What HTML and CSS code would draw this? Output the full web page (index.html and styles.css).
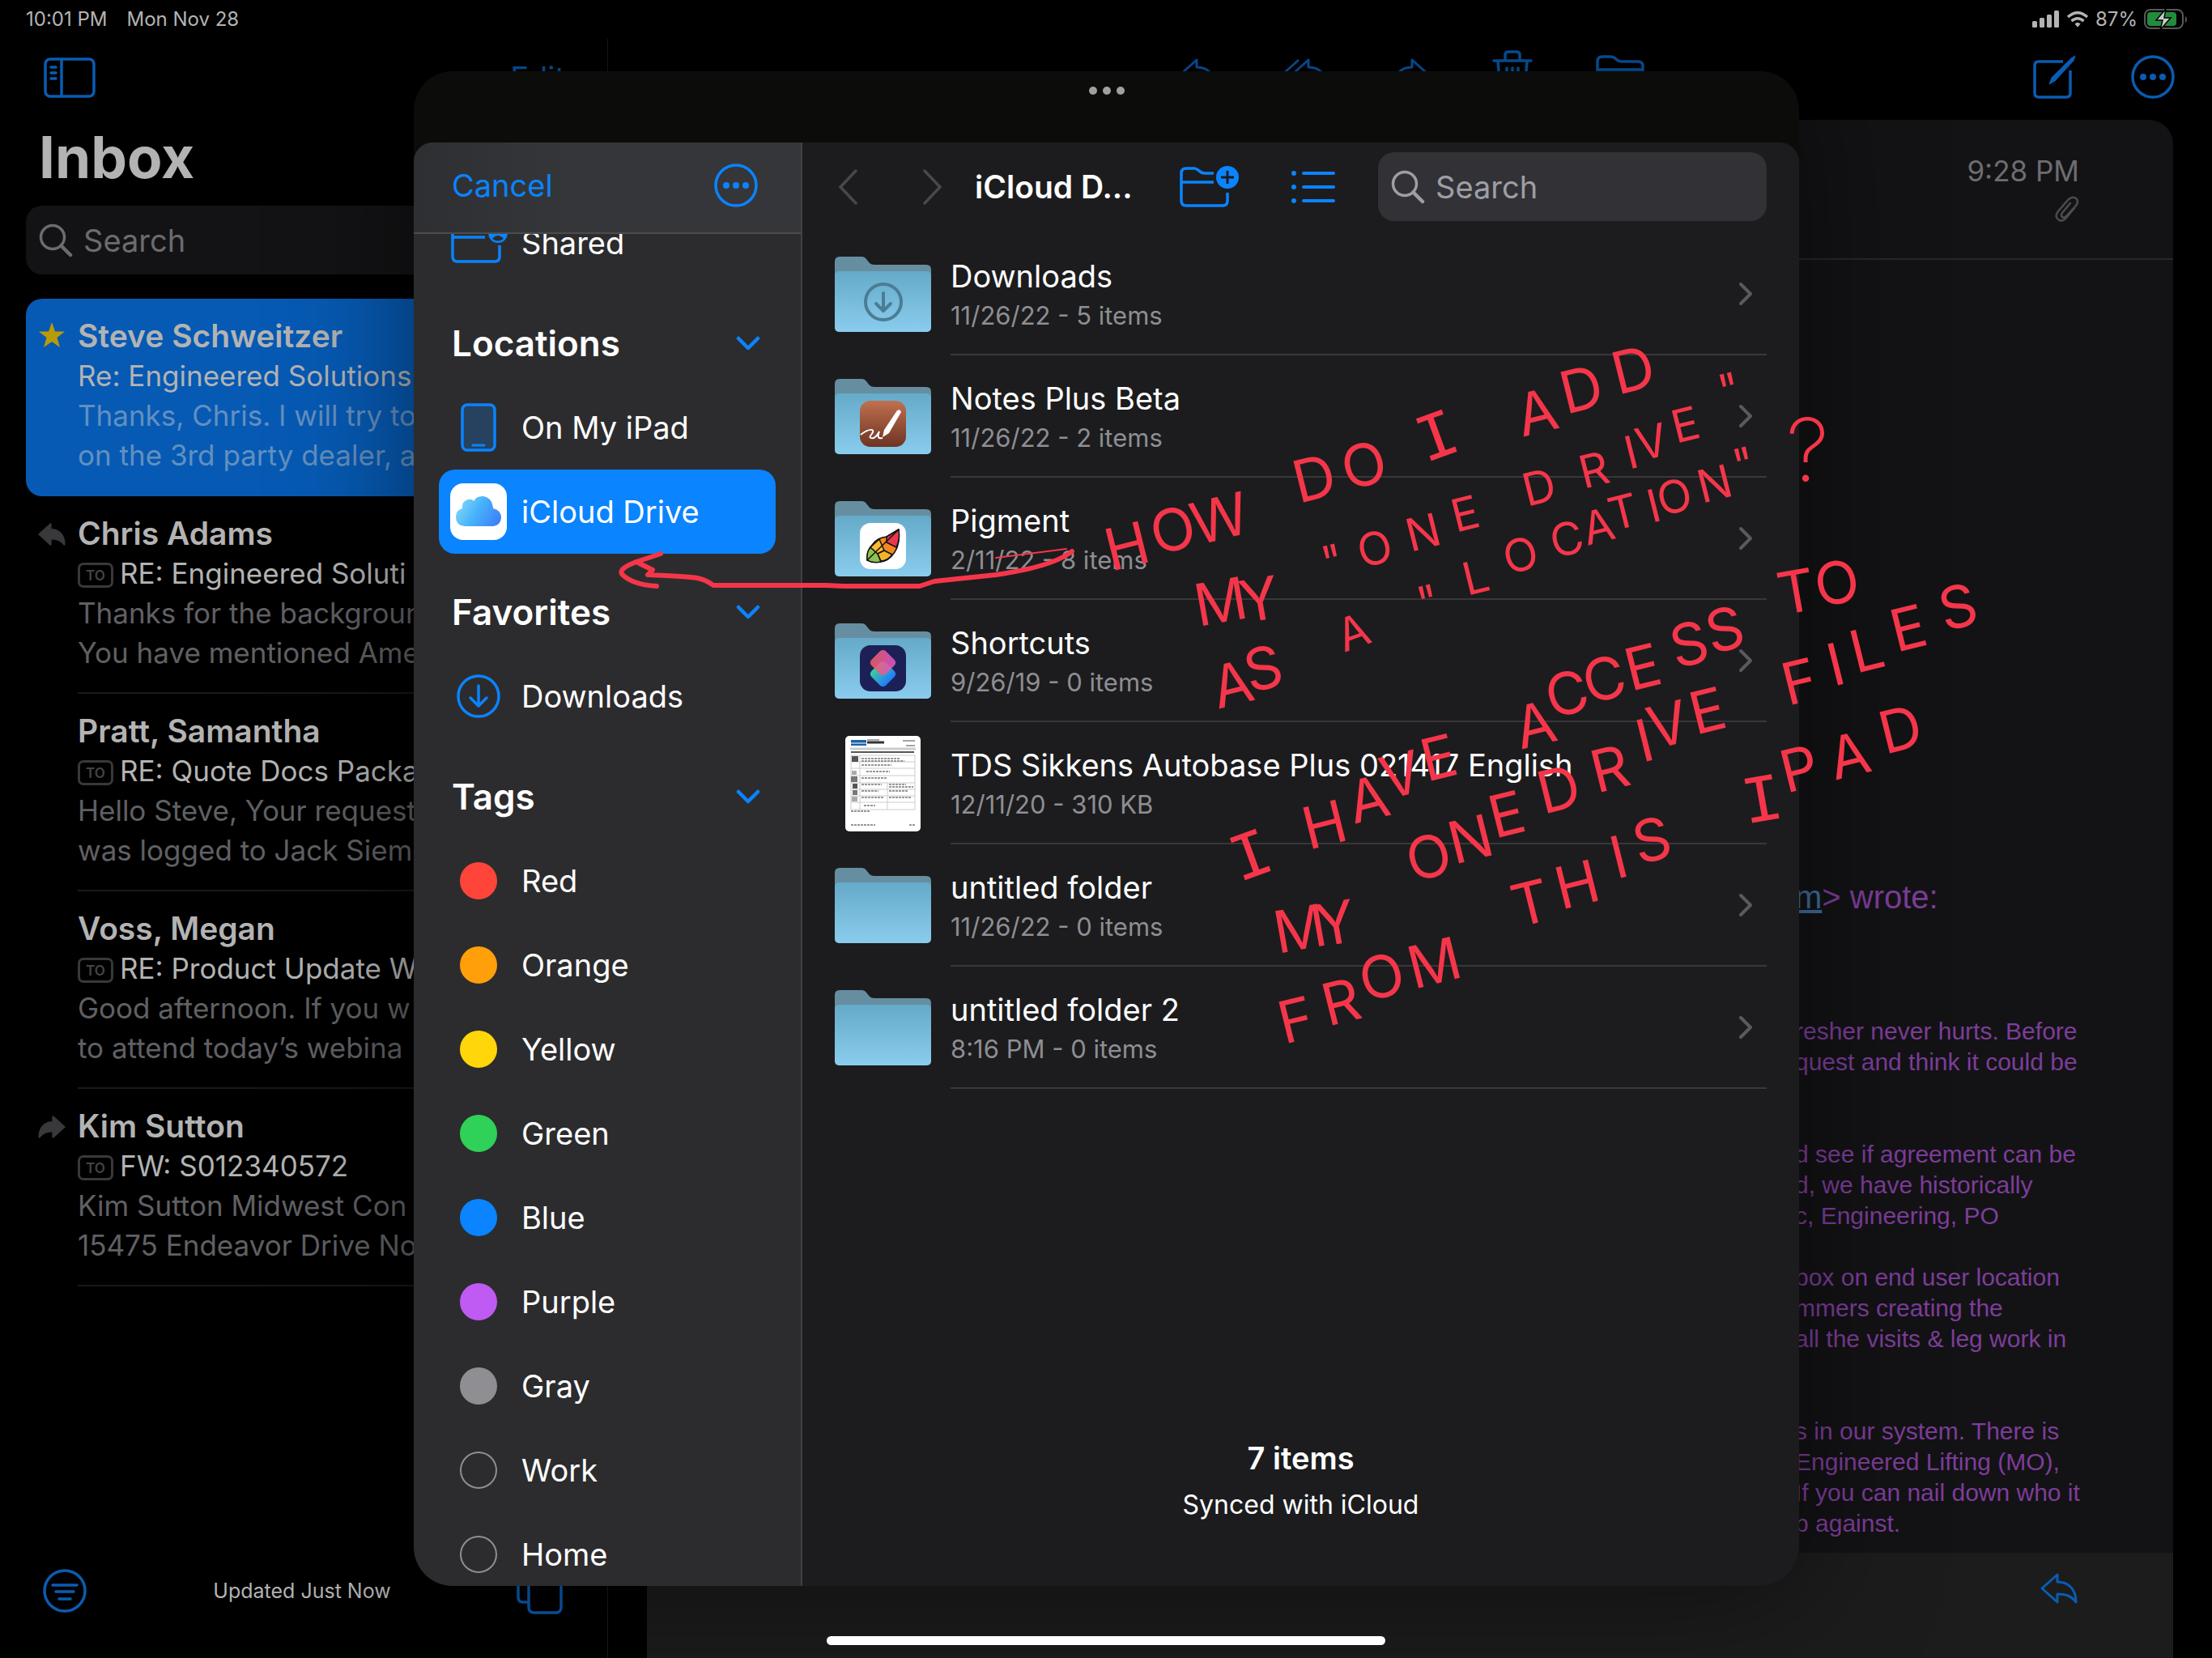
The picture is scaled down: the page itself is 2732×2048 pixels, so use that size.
FILE: index.html
```html
<!DOCTYPE html>
<html lang="en">
<head>
<meta charset="utf-8">
<meta name="viewport" content="width=device-width, initial-scale=1">
<title>Inbox</title>
<link rel="stylesheet" href="styles.css">
</head>
<body>
<svg class="defs" width="0" height="0" aria-hidden="true">
  <defs>
    <linearGradient id="folderFront" x1="0" y1="0" x2="0" y2="1"><stop offset="0" stop-color="#65aac9"/><stop offset="1" stop-color="#8acced"/></linearGradient>
    <linearGradient id="notesFill" x1="0" y1="0" x2="0" y2="1"><stop offset="0" stop-color="#c0704f"/><stop offset="1" stop-color="#6d3423"/></linearGradient>
    <linearGradient id="cloudFill" x1="0" y1="0.3" x2="1" y2="0.7"><stop offset="0" stop-color="#7fd8f6"/><stop offset="0.5" stop-color="#45b0fb"/><stop offset="1" stop-color="#3e82f7"/></linearGradient>
    <linearGradient id="scTop" x1="0" y1="1" x2="1" y2="0"><stop offset="0" stop-color="#f0605a"/><stop offset="1" stop-color="#e055d0"/></linearGradient>
    <linearGradient id="scBottom" x1="0" y1="0" x2="1" y2="0"><stop offset="0" stop-color="#3ecf9a"/><stop offset="1" stop-color="#1f7bff"/></linearGradient>
    <symbol id="folder" viewBox="0 0 119 93">
      <path d="M0 6Q0 0 6 0H33Q37 0 39 3L43 8Q45 10 49 10H113Q119 10 119 16V40H0Z" fill="#668ea1"/>
      <rect y="18" width="119" height="75" rx="5" fill="url(#folderFront)"/>
    </symbol>
    <symbol id="search" viewBox="0 0 42 42"><circle cx="17" cy="17" r="14.500" fill="none" stroke="currentColor" stroke-width="3.500"/><path d="M27.500 27.500 39 39" stroke="currentColor" stroke-width="4.500" stroke-linecap="round"/></symbol>
    <symbol id="more" viewBox="0 0 54 54"><circle cx="27" cy="27" r="25" fill="none" stroke="currentColor" stroke-width="3.500"/><g fill="currentColor"><circle cx="15" cy="27" r="4"/><circle cx="27" cy="27" r="4"/><circle cx="39" cy="27" r="4"/></g></symbol>
    <symbol id="reply" viewBox="0 0 46 40"><path d="M2 20 21 3V12C35 12 44 21 44 37C38 29 31 27 21 27V37Z" fill="none" stroke="currentColor" stroke-width="3" stroke-linejoin="round"/></symbol>
    <symbol id="replyFill" viewBox="0 0 46 40"><path d="M2 20 21 3V12C35 12 44 21 44 37C38 29 31 27 21 27V37Z" fill="currentColor" stroke="currentColor" stroke-width="3" stroke-linejoin="round"/></symbol>
    <symbol id="next" viewBox="0 0 18 30"><path d="M3 3 15 15 3 27" fill="none" stroke="currentColor" stroke-width="4" stroke-linecap="round" stroke-linejoin="round"/></symbol>
    <symbol id="down" viewBox="0 0 30 18"><path d="M3 3 15 15 27 3" fill="none" stroke="currentColor" stroke-width="4.500" stroke-linecap="round" stroke-linejoin="round"/></symbol>
    <symbol id="download" viewBox="0 0 54 54"><circle cx="27" cy="27" r="25" fill="none" stroke="currentColor" stroke-width="3.500"/><path d="M27 14V38M17 29 27 39 37 29" fill="none" stroke="currentColor" stroke-width="3.500" stroke-linecap="round" stroke-linejoin="round"/></symbol>
  </defs>
</svg>

<div class="screen">
  <header class="status">
    <span>10:01 PM</span><span>Mon Nov 28</span>
    <span class="status-right">
      <svg width="34" height="22" viewBox="0 0 34 22" fill="currentColor"><rect x="0" y="13" width="6" height="8" rx="1.500"/><rect x="9" y="9" width="6" height="12" rx="1.500"/><rect x="18" y="5" width="6" height="16" rx="1.500"/><rect x="27" y="0" width="6" height="21" rx="1.500"/></svg>
      <svg width="28" height="20" viewBox="0 0 28 20" fill="none" stroke="currentColor" stroke-width="3.500"><path d="M2 7Q14-3.500 26 7"/><path d="M6.500 12Q14 5.500 21.500 12"/><path d="M11 15.500Q14 13 17 15.500L14 19Z" fill="currentColor" stroke-width="1"/></svg>
      <span>87%</span>
      <svg width="54" height="26" viewBox="0 0 54 26"><rect x="1" y="1" width="47" height="23" rx="7" fill="none" stroke="#58585a" stroke-width="2"/><path d="M51 9V17Q53 16 53 13T51 9Z" fill="#58585a"/><rect x="4" y="4" width="36" height="17" rx="4" fill="#238c3c"/><path d="M27 0 15 14H23L20 26 33 11H25Z" fill="#c8c8c8" stroke="#000" stroke-width="1.500"/></svg>
    </span>
  </header>

  <div class="mail">
    <aside class="inbox">
      <div class="inbox-bar">
        <button aria-label="Show mailboxes"><svg width="64" height="50" viewBox="0 0 64 50" fill="none" stroke="currentColor" stroke-width="3.500" stroke-linecap="round"><rect x="2" y="2" width="60" height="46" rx="6"/><path d="M22 2V48M9 12H15M9 19H15M9 26H15"/></svg></button>
        <button>Edit</button>
      </div>
      <h1>Inbox</h1>
      <label class="search dim"><svg width="42" height="42"><use href="#search"/></svg><input type="search" placeholder="Search" aria-label="Search mail"></label>
      <ul class="messages">
        <li class="selected"><a href="#m1">
          <svg class="mark star" width="34" height="34" viewBox="0 0 34 34"><path d="M17 1 21 12.500 33 12.500 23.500 20 27 32 17 25 7 32 10.500 20 1 12.500 13 12.500Z" fill="currentColor"/></svg>
          <strong>Steve Schweitzer</strong><span class="subject">Re: Engineered Solutions</span><span class="preview">Thanks, Chris. I will try to<br>on the 3rd party dealer, a</span></a></li>
        <li><a href="#m2">
          <svg class="mark" width="34" height="30"><use href="#replyFill"/></svg>
          <strong>Chris Adams</strong><span class="subject"><i>TO</i>RE: Engineered Soluti</span><span class="preview">Thanks for the backgroun<br>You have mentioned Ame</span></a></li>
        <li><a href="#m3">
          <strong>Pratt, Samantha</strong><span class="subject"><i>TO</i>RE: Quote Docs Packa</span><span class="preview">Hello Steve, Your request<br>was logged to Jack Siem</span></a></li>
        <li><a href="#m4">
          <strong>Voss, Megan</strong><span class="subject"><i>TO</i>RE: Product Update W</span><span class="preview">Good afternoon. If you w<br>to attend today’s webina</span></a></li>
        <li><a href="#m5">
          <svg class="mark flip" width="34" height="30"><use href="#replyFill"/></svg>
          <strong>Kim Sutton</strong><span class="subject"><i>TO</i>FW: S012340572</span><span class="preview">Kim Sutton Midwest Con<br>15475 Endeavor Drive No</span></a></li>
      </ul>
      <footer class="inbox-foot">
        <button aria-label="Filter"><svg width="56" height="56" viewBox="0 0 56 56" fill="none" stroke="currentColor" stroke-width="3.500" stroke-linecap="round"><circle cx="28" cy="28" r="25"/><path d="M13 21H43M17 29H39M21 38H35"/></svg></button>
        <span>Updated Just Now</span>
        <button aria-label="Windows"><svg width="58" height="58" viewBox="0 0 58 58" fill="none" stroke="currentColor" stroke-width="3.500"><rect x="15" y="8" width="40" height="48" rx="6"/><path d="M15 43H8Q2 43 2 37V8Q2 2 8 2H36Q42 2 42 8"/></svg></button>
      </footer>
    </aside>

    <main class="reader">
      <div class="reader-bar">
        <div class="reader-actions">
          <button aria-label="Reply"><svg width="46" height="40"><use href="#reply"/></svg></button>
          <button aria-label="Reply all"><svg width="60" height="40" viewBox="0 0 60 40" fill="none" stroke="currentColor" stroke-width="3" stroke-linejoin="round"><path d="M16 20 35 3V12C49 12 58 21 58 37C52 29 45 27 35 27V37Z"/><path d="M23 3 4 20 23 37"/></svg></button>
          <button aria-label="Forward"><svg class="flip" width="46" height="40"><use href="#reply"/></svg></button>
          <button aria-label="Delete"><svg width="50" height="58" viewBox="0 0 50 58" fill="none" stroke="currentColor" stroke-width="3.500" stroke-linecap="round"><path d="M2 13H48M7 13 10 52Q11 56 15 56H35Q39 56 40 52L43 13M16 12V6Q16 2 20 2H30Q34 2 34 6V12M18 22V46M25 22V46M32 22V46"/></svg></button>
          <button aria-label="Move"><svg width="60" height="46" viewBox="0 0 60 46" fill="none" stroke="currentColor" stroke-width="3.500"><path d="M2 38V8Q2 2 8 2H18Q22 2 25 5T31 8H52Q58 8 58 14V38Q58 44 52 44H8Q2 44 2 38ZM2 18H58"/></svg></button>
        </div>
        <button aria-label="New message"><svg width="56" height="56" viewBox="0 0 56 56" fill="none" stroke="currentColor" stroke-width="3.500"><path d="M38 9H8Q3 9 3 14V48Q3 53 8 53H42Q47 53 47 48V20"/><path d="M21 37 24 29 48 5 53 2 51 8 28 33Z" fill="currentColor" stroke-width="1"/></svg></button>
        <button aria-label="More"><svg width="54" height="54"><use href="#more"/></svg></button>
      </div>
      <article class="card">
        <div class="card-head">
          <time>9:28 PM</time>
          <svg width="30" height="34" viewBox="0 0 30 34" fill="none" stroke="currentColor" stroke-width="2.500" stroke-linecap="round"><path d="M24 15 14 27Q9 33 4 29T4 19L17 4Q22 0 26 3T26 12L14 25Q11 28 9 26T9 21L19 9"/></svg>
        </div>
        <div class="letter">
          <p class="wrote"><a href="#sender">m</a>&gt; wrote:</p>
          <p>resher never hurts. Before<br>quest and think it could be</p>
          <p>d see if agreement can be<br>d, we have historically<br>c, Engineering, PO</p>
          <p>box on end user location<br>mmers creating the<br>all the visits &amp; leg work in</p>
          <p>s in our system. There is<br>Engineered Lifting (MO),<br>If you can nail down who it<br>p against.</p>
        </div>
        <footer class="card-foot"><button aria-label="Reply to message"><svg width="46" height="40"><use href="#reply"/></svg></button></footer>
      </article>
    </main>
  </div>

  <section class="modal" role="dialog" aria-label="iCloud Drive">
    <div class="grip"><b></b><b></b><b></b></div>
    <div class="sheet">
      <nav class="places">
        <div class="places-bar"><button>Cancel</button><button aria-label="More options"><svg width="54" height="54"><use href="#more"/></svg></button></div>
        <div class="places-list">
          <a class="place first" href="#shared"><span class="ico blue"><svg width="72" height="50" viewBox="0 0 72 50" fill="none" stroke="currentColor" stroke-width="3.500"><path d="M44 8H31Q27 8 25 5T19 2H10Q4 2 4 8V42Q4 48 10 48H56Q62 48 62 42V28M4 18H44"/><circle cx="60" cy="13" r="12" fill="currentColor" stroke="none"/><circle cx="60" cy="10" r="4" fill="#2c2c2e" stroke="none"/><path d="M53 20Q60 12 67 20Q60 25 53 20Z" fill="#2c2c2e" stroke="none"/></svg></span>Shared</a>
          <h2>Locations<svg width="30" height="18"><use href="#down"/></svg></h2>
          <a class="place" href="#ipad"><span class="ico blue"><svg width="44" height="60" viewBox="0 0 44 60"><rect x="2" y="2" width="40" height="56" rx="6" fill="#26425f" stroke="currentColor" stroke-width="3.500"/><path d="M15 52H29" stroke="currentColor" stroke-width="3" stroke-linecap="round"/></svg></span>On My iPad</a>
          <a class="place current" href="#icloud"><span class="ico"><svg width="70" height="70" viewBox="0 0 70 70"><rect width="70" height="70" rx="16" fill="#fff"/><path d="M18 53Q7 52 7 42Q7 33 15 31Q14 22 22 20Q27 19 29 22Q33 15 41 16Q52 18 53 31Q63 33 63 43Q62 52 53 53Z" fill="url(#cloudFill)"/></svg></span>iCloud Drive</a>
          <h2>Favorites<svg width="30" height="18"><use href="#down"/></svg></h2>
          <a class="place" href="#downloads"><span class="ico blue"><svg width="54" height="54"><use href="#download"/></svg></span>Downloads</a>
          <h2>Tags<svg width="30" height="18"><use href="#down"/></svg></h2>
          <a class="place" href="#red"><span class="ico"><span class="dot red"></span></span>Red</a>
          <a class="place" href="#orange"><span class="ico"><span class="dot orange"></span></span>Orange</a>
          <a class="place" href="#yellow"><span class="ico"><span class="dot yellow"></span></span>Yellow</a>
          <a class="place" href="#green"><span class="ico"><span class="dot green"></span></span>Green</a>
          <a class="place" href="#blue"><span class="ico"><span class="dot azure"></span></span>Blue</a>
          <a class="place" href="#purple"><span class="ico"><span class="dot purple"></span></span>Purple</a>
          <a class="place" href="#gray"><span class="ico"><span class="dot gray"></span></span>Gray</a>
          <a class="place" href="#work"><span class="ico"><span class="dot"></span></span>Work</a>
          <a class="place" href="#home"><span class="ico"><span class="dot"></span></span>Home</a>
        </div>
      </nav>

      <div class="files">
        <div class="files-bar">
          <button class="off" aria-label="Back"><svg width="24" height="46" viewBox="0 0 24 46"><path d="M22 3 3 23 22 43" fill="none" stroke="currentColor" stroke-width="3.500" stroke-linecap="round"/></svg></button>
          <button class="off forward" aria-label="Forward"><svg width="24" height="46" viewBox="0 0 24 46"><path d="M2 3 21 23 2 43" fill="none" stroke="currentColor" stroke-width="3.500" stroke-linecap="round"/></svg></button>
          <h2>iCloud D...</h2>
          <button aria-label="New folder"><svg width="74" height="52" viewBox="0 0 74 52"><path d="M42 9H31Q27 9 24 6T18 3H8Q2 3 2 9V43Q2 49 8 49H53Q59 49 59 43V33M2 20H42" fill="none" stroke="currentColor" stroke-width="3.500"/><circle cx="59" cy="14" r="14" fill="currentColor"/><path d="M59 6V22M51 14H67" stroke="#1c1c1e" stroke-width="3"/></svg></button>
          <button aria-label="List view"><svg width="54" height="42" viewBox="0 0 54 42"><path d="M15 4H52M15 21H52M15 38H52" stroke="currentColor" stroke-width="4" stroke-linecap="round"/><g fill="currentColor"><circle cx="3" cy="4" r="3"/><circle cx="3" cy="21" r="3"/><circle cx="3" cy="38" r="3"/></g></svg></button>
          <label class="search"><svg width="42" height="42"><use href="#search"/></svg><input type="search" placeholder="Search" aria-label="Search files"></label>
        </div>
        <ul class="file-list">
          <li><svg width="119" height="93"><use href="#folder"/><g transform="translate(37 33)" color="#4a7d94"><circle cx="23" cy="23" r="22" fill="none" stroke="currentColor" stroke-width="4"/><path d="M23 12V33M14 25 23 34 32 25" fill="none" stroke="currentColor" stroke-width="4" stroke-linecap="round" stroke-linejoin="round"/></g></svg>
            <a href="#f1"><span><strong>Downloads</strong><small>11/26/22 - 5 items</small></span><svg width="18" height="30"><use href="#next"/></svg></a></li>
          <li><svg width="119" height="93"><use href="#folder"/><g transform="translate(31 27)"><rect width="57" height="57" rx="13" fill="url(#notesFill)"/><path d="M28 45 30 36 46 12Q50 10 51 14L36 40Z" fill="#fff"/><path d="M1 42Q10 35 15 36Q18 37 14 42T17 46Q21 44 24 38Q20 48 28 46" fill="none" stroke="#fff" stroke-width="2"/></g></svg>
            <a href="#f2"><span><strong>Notes Plus Beta</strong><small>11/26/22 - 2 items</small></span><svg width="18" height="30"><use href="#next"/></svg></a></li>
          <li><svg width="119" height="93"><use href="#folder"/><g transform="translate(31 27)" stroke="#111" stroke-width="1.500" stroke-linejoin="round"><rect width="57" height="57" rx="13" fill="#fff" stroke="none"/><path d="M9 46Q8 34 16 26Q22 18 33 17L48 8Q50 26 43 36Q34 50 20 48Z" fill="#f28a1f"/><path d="M33 17 48 8Q50 20 45 30L33 24Z" fill="#e8384f"/><path d="M9 46Q8 36 13 30L22 38 26 48Q16 50 9 46Z" fill="#8fc152"/><path d="M13 30 24 20 30 34 22 38Z" fill="#fdbb2d"/><path d="M26 47 22 38 30 34 40 39Q34 47 26 47Z" fill="#f2b52a"/><path d="M9 46 48 8" fill="none"/></g></svg>
            <a href="#f3"><span><strong>Pigment</strong><small>2/11/22 - 8 items</small></span><svg width="18" height="30"><use href="#next"/></svg></a></li>
          <li><svg width="119" height="93"><use href="#folder"/><g transform="translate(31 27)"><rect width="57" height="57" rx="13" fill="#1d2057"/><rect x="16" y="23" width="25" height="25" rx="5" transform="rotate(45 28.500 35.500)" fill="url(#scBottom)"/><rect x="16" y="9" width="25" height="25" rx="5" transform="rotate(45 28.500 21.500)" fill="url(#scTop)" opacity="0.880"/></g></svg>
            <a href="#f4"><span><strong>Shortcuts</strong><small>9/26/19 - 0 items</small></span><svg width="18" height="30"><use href="#next"/></svg></a></li>
          <li><svg width="119" height="118" viewBox="0 0 119 118"><rect x="13" width="93" height="118" rx="5" fill="#fff"/><path d="M20 5H39V12H20Z" fill="#1d62a8"/><path d="M20 9H39" stroke="#fff"/><path d="M40 8H61" stroke="#333" stroke-width="3"/><path d="M84 6H99M88 12H99M40 5H55" stroke="#888" stroke-width="1.500"/><path d="M19 16H100" stroke="#ccc" stroke-width="3"/><path d="M20 20H98" stroke="#555" stroke-width="2"/><g fill="none" stroke="#ccc"><rect x="20" y="24" width="79" height="67"/><path d="M31 24V91M65 58V91M20 32H99M20 40H99M20 49H99M20 58H99M20 66H99M20 74H99M20 82H99"/></g><g fill="#555"><rect x="21" y="25" width="8" height="7"/><rect x="21" y="43" width="6" height="5" fill="#aaa"/><rect x="20" y="50" width="8" height="7" fill="#777"/><rect x="22" y="59" width="6" height="6"/><rect x="22" y="67" width="6" height="6" fill="#777"/><rect x="21" y="75" width="7" height="6" fill="#aaa"/></g><path d="M33 28H80M33 31H86M33 36H70M39 44H68M33 52H64M33 60H58M67 60H88M67 63H97M33 68H54M67 68H90M33 76H60M67 76H94M36 86H50M20 93H44M20 110H50M92 110H99" stroke="#777" stroke-width="1.500" stroke-dasharray="3 1"/></svg>
            <a href="#f5"><span><strong>TDS Sikkens Autobase Plus 021417 English</strong><small>12/11/20 - 310 KB</small></span></a></li>
          <li><svg width="119" height="93"><use href="#folder"/></svg>
            <a href="#f6"><span><strong>untitled folder</strong><small>11/26/22 - 0 items</small></span><svg width="18" height="30"><use href="#next"/></svg></a></li>
          <li><svg width="119" height="93"><use href="#folder"/></svg>
            <a href="#f7"><span><strong>untitled folder 2</strong><small>8:16 PM - 0 items</small></span><svg width="18" height="30"><use href="#next"/></svg></a></li>
        </ul>
        <footer class="files-foot"><strong>7 items</strong><span>Synced with iCloud</span></footer>
      </div>
    </div>
  </section>

  <!-- Red pen markup laid over the screen; each letter sits on its own spot -->
  <svg class="ink" viewBox="0 0 2732 2048">
    <g fill="none" stroke="currentColor" stroke-width="6" stroke-linecap="round" stroke-linejoin="round">
      <path d="M816 684 786 694Q764 702 768 709Q780 722 811 724"/>
      <path d="M786 694 806 704 800 710Q850 712 861 714T881 723H1020L1042 724H1136L1154 718 1230 710Q1300 700 1324 681"/>
      <path d="M1230 689 1317 678" stroke-width="2"/>
    </g>
    <g class="l">
      <text x="1372 1428 1478" y="706 686 674" rotate="-14">HOW</text>
      <text x="1604 1664" y="622 606" rotate="-14">DO</text>
      <text class="bar" x="1760" y="572" rotate="-20">I</text>
      <text x="1880 1934 1998" y="540 512 488" rotate="-14">ADD</text>
      <text x="1480 1536" y="774 770" rotate="-10">MY</text>
      <text x="1504 1544" y="876 856" rotate="-14">AS</text>
      <text class="bar" x="1530" y="1090" rotate="-20">I</text>
      <text x="1616 1672 1712 1762" y="1050 1018 988 966" rotate="-14">HAVE</text>
      <text x="1878 1916 1962 2014 2070 2114" y="926 888 870 854 826 808" rotate="-14">ACCESS</text>
      <text x="2200 2246" y="760 750" rotate="-10">TO</text>
      <text x="1578 1630" y="1178 1170" rotate="-10">MY</text>
      <text x="1744 1796 1846 1906 1972 2028 2042 2094" y="1090 1068 1036 1006 980 942 926 908" rotate="-14">ONEDRIVE</text>
      <text x="2208 2264 2292 2342 2402" y="872 848 832 806 780" rotate="-14">FILES</text>
      <text x="1586 1640 1686 1746" y="1290 1268 1238 1222" rotate="-14">FROM</text>
      <text x="1874 1928 1996 2024" y="1146 1124 1086 1068" rotate="-14">THIS</text>
      <text x="2206 2266 2328" y="980 964 932" rotate="-14">PAD</text>
      <text class="bar" x="2156" y="1018" rotate="-10">I</text>
    </g>
    <text class="xl" x="2206" y="594">?</text>
    <g class="s">
      <text x="1638 1682 1742 1798" y="716 702 682 658" rotate="-14">"ONE</text>
      <text x="1886 1956 2012 2026 2070 2128" y="626 604 580 570 548 504" rotate="-14">DRIVE"</text>
      <text x="1660" y="806" rotate="-20">A</text>
      <text x="1756" y="766" rotate="-14">"</text>
      <text x="1812 1862 1920 1960 1992 2040 2052 2102 2146" y="736 710 690 674 656 646 638 622 596" rotate="-14">LOCATION"</text>
    </g>
  </svg>
  <div class="home"></div>
</div>
</body>
</html>
```

FILE: styles.css
```css
* { box-sizing: border-box; }
body {
  margin: 0;
  background: #000;
  color: #fff;
  font: 400 38px/1 Inter, "Liberation Sans", sans-serif;
}
h1, h2, p, ul { margin: 0; padding: 0; }
ul { list-style: none; }
a { color: inherit; text-decoration: none; }
svg { display: block; flex: none; }
button {
  display: block;
  padding: 0;
  border: 0;
  background: none;
  color: inherit;
  font: inherit;
}
.defs { position: absolute; }
.flip { transform: scaleX(-1); }

.screen {
  position: relative;
  display: flex;
  flex-direction: column;
  height: 100vh;
  overflow: hidden;
}

/* Status bar */
.status {
  display: flex;
  align-items: center;
  gap: 24px;
  height: 48px;
  padding: 0 30px 0 32px;
  color: #b4b4b4;
  font-size: 24px;
}
.status-right {
  display: flex;
  align-items: center;
  gap: 8px;
  margin-left: auto;
}

/* Mail behind the dialog */
.mail { flex: 1; display: flex; min-height: 0; }
.inbox {
  display: flex;
  flex-direction: column;
  flex: 0 0 751px;
  border-right: 1px solid #1c1c1e;
}
.inbox-bar {
  display: flex;
  justify-content: space-between;
  align-items: center;
  height: 96px;
  padding: 0 52px 0 54px;
  color: #0a5cb2;
}
.inbox h1 {
  height: 110px;
  padding-left: 48px;
  color: #b3b3b3;
  font-size: 71px;
  font-weight: 700;
  line-height: 100px;
}
.search {
  display: flex;
  align-items: center;
  gap: 13px;
  height: 85px;
  padding: 0 16px;
  border-radius: 20px;
  background: #323236;
  color: #9e9ea6;
}
.search.dim { flex: none; margin: 0 32px 30px; background: #131315; color: #6b6b70; }
.search input {
  flex: 1;
  min-width: 0;
  padding: 0;
  border: 0;
  outline: 0;
  background: none;
  color: inherit;
  font: inherit;
}
.search input::placeholder { color: inherit; opacity: 1; }

.messages { margin: 0 32px; }
.messages li { height: 244px; padding-left: 64px; }
.messages a {
  position: relative;
  display: block;
  height: 100%;
  padding-top: 20px;
  border-bottom: 2px solid #19191b;
  color: #b3b3b3;
  white-space: nowrap;
}
.messages strong { display: block; font-size: 39px; font-weight: 600; line-height: 51px; }
.subject, .preview { display: block; font-size: 35px; line-height: 49px; }
.preview { color: #606064; }
.subject i {
  display: inline-block;
  width: 44px;
  height: 31px;
  margin-right: 8px;
  border: 3px solid #39393b;
  border-radius: 7px;
  color: #444446;
  font: 600 17px/26px Inter, sans-serif;
  text-align: center;
  vertical-align: 4px;
}
.mark { position: absolute; left: -49px; top: 32px; color: #39393b; }
.star { top: 28px; color: #b99a08; }
.messages .selected { border-radius: 20px; background: #065ab4; }
.selected a { border-color: transparent; }
.selected .preview { color: #6390bf; }

.inbox-foot {
  display: flex;
  align-items: center;
  justify-content: space-between;
  margin-top: auto;
  height: 166px;
  padding: 0 54px 0 52px;
  color: #0a5cb2;
}
.inbox-foot span { color: #b3b3b3; font-size: 25px; }

.reader { flex: 1; display: flex; flex-direction: column; min-width: 0; padding: 0 48px; }
.reader-bar {
  display: flex;
  align-items: center;
  justify-content: flex-end;
  gap: 66px;
  flex: none;
  height: 100px;
  margin-right: -2px;
  padding-bottom: 6px;
  color: #0a5cb2;
}
.reader-actions {
  display: flex;
  align-items: center;
  gap: 78px;
  margin-right: auto;
  padding: 0 0 8px 658px;
}
.card {
  flex: 1;
  display: flex;
  flex-direction: column;
  border-radius: 30px 30px 0 0;
  background: #131315;
  overflow: hidden;
}
.card-head {
  display: flex;
  flex: none;
  flex-direction: column;
  align-items: flex-end;
  gap: 12px;
  height: 173px;
  padding: 44px 116px 0 0;
  border-bottom: 2px solid #28282a;
  color: #4c4c4f;
}
.card-head time { color: #6d6d71; font-size: 35px; line-height: 38px; }
.letter {
  flex: 1;
  align-self: flex-end;
  width: 467px;
  min-height: 0;
  padding-top: 768px;
  color: #7d3d9a;
  font: 30px/38px "Liberation Sans", Arial, sans-serif;
  white-space: nowrap;
}
.letter p { margin-bottom: 76px; }
.letter p.wrote { margin-bottom: 128px; font-size: 40px; }
.letter p:nth-child(3) { margin-bottom: 38px; }
.letter p:last-child { margin-bottom: 0; }
.letter a { color: #3f6f9e; text-decoration: underline; }
.card-foot {
  display: flex;
  align-items: flex-start;
  justify-content: flex-end;
  flex: none;
  height: 130px;
  padding: 24px 118px 0 0;
  background: #1c1c1d;
  color: #0a5cb2;
}

/* File picker dialog */
.modal {
  position: absolute;
  inset: 88px 510px 89px 511px;
  display: flex;
  flex-direction: column;
  border-radius: 48px;
  background: #0c0d0b;
  box-shadow: 0 0 160px rgba(0, 0, 0, 0.5);
  overflow: hidden;
}
.grip { display: flex; justify-content: center; gap: 7px; height: 88px; padding-top: 19px; }
.grip b { width: 10px; height: 10px; border-radius: 50%; background: #a0a09e; }
.sheet {
  flex: 1;
  display: flex;
  min-height: 0;
  border-radius: 24px 24px 0 0;
  overflow: hidden;
}
.places {
  display: flex;
  flex-direction: column;
  flex: 0 0 480px;
  border-right: 2px solid #414144;
  background: #2c2c2e;
}
.places-bar {
  display: flex;
  align-items: center;
  justify-content: space-between;
  flex: none;
  height: 113px;
  padding: 0 53px 6px 47px;
  border-bottom: 2px solid #4c4c4f;
  background: linear-gradient(90deg, #2e2f33, #353639 40%);
  color: #0a84ff;
}
.places-list { flex: 1; min-height: 0; padding: 0 31px; overflow: hidden; }
.place {
  display: flex;
  align-items: center;
  gap: 18px;
  height: 104px;
  padding-left: 14px;
  border-radius: 20px;
}
.place.first { margin-top: -41px; }
.place.current { background: #0a84ff; }
.ico { display: flex; justify-content: center; width: 70px; }
.blue { color: #0a84ff; }
.places h2 {
  display: flex;
  align-items: center;
  justify-content: space-between;
  height: 104px;
  margin-top: 20px;
  padding: 0 19px 0 16px;
  font-size: 44px;
  font-weight: 600;
}
.places h2 svg { color: #0a84ff; }
.dot { width: 46px; height: 46px; border: 2px solid #8e8e93; border-radius: 50%; }
.red { border-color: #ff453a; background: #ff453a; }
.orange { border-color: #ff9f0a; background: #ff9f0a; }
.yellow { border-color: #ffd60a; background: #ffd60a; }
.green { border-color: #30d158; background: #30d158; }
.azure { border-color: #0a84ff; background: #0a84ff; }
.purple { border-color: #bf5af2; background: #bf5af2; }
.gray { border-color: #8e8e93; background: #8e8e93; }

.files { flex: 1; display: flex; flex-direction: column; min-width: 0; background: #1c1c1e; }
.files-bar {
  display: flex;
  align-items: center;
  height: 112px;
  padding: 0 40px 3px 44px;
  color: #0a84ff;
}
.files-bar .off { color: #48484a; }
.files-bar .forward { margin: 0 40px 0 81px; }
.files-bar h2 { margin-right: auto; color: #fff; font-size: 39px; font-weight: 600; }
.files-bar h2 ~ button { margin-right: 64px; }
.files-bar h2 ~ button + button { margin-right: 53px; }
.files-bar .search { width: 480px; }

.file-list { padding: 0 40px; }
.file-list li { display: flex; align-items: center; gap: 24px; height: 151px; }
.file-list a {
  flex: 1;
  display: flex;
  align-items: center;
  justify-content: space-between;
  height: 100%;
  padding-right: 17px;
  border-bottom: 2px solid #38383a;
  color: #5a5a5e;
}
.file-list span { padding-top: 6px; }
.file-list strong {
  display: block;
  color: #fff;
  font-weight: 400;
  line-height: 48px;
}
.file-list small { display: block; color: #8e8e93; font-size: 31px; line-height: 49px; }
.files-foot {
  display: flex;
  flex-direction: column;
  align-items: center;
  margin-top: auto;
  padding-bottom: 71px;
  font-size: 32px;
  line-height: 58px;
}
.files-foot strong { font-size: 38px; font-weight: 600; }

/* Pen markup and home bar sit on top of everything */
.ink {
  position: absolute;
  inset: 0;
  width: 100%;
  height: 100%;
  color: #f5364a;
  fill: currentColor;
  pointer-events: none;
}
.ink .l { font-size: 72px; }
.ink .s { font-size: 56px; }
.ink .xl { font-size: 108px; font-weight: 200; }
.ink .bar { font-family: "Liberation Mono", monospace; font-size: 84px; }
.home {
  position: absolute;
  bottom: 16px;
  left: 50%;
  width: 690px;
  height: 11px;
  margin-left: -345px;
  border-radius: 6px;
  background: #fff;
}
```
